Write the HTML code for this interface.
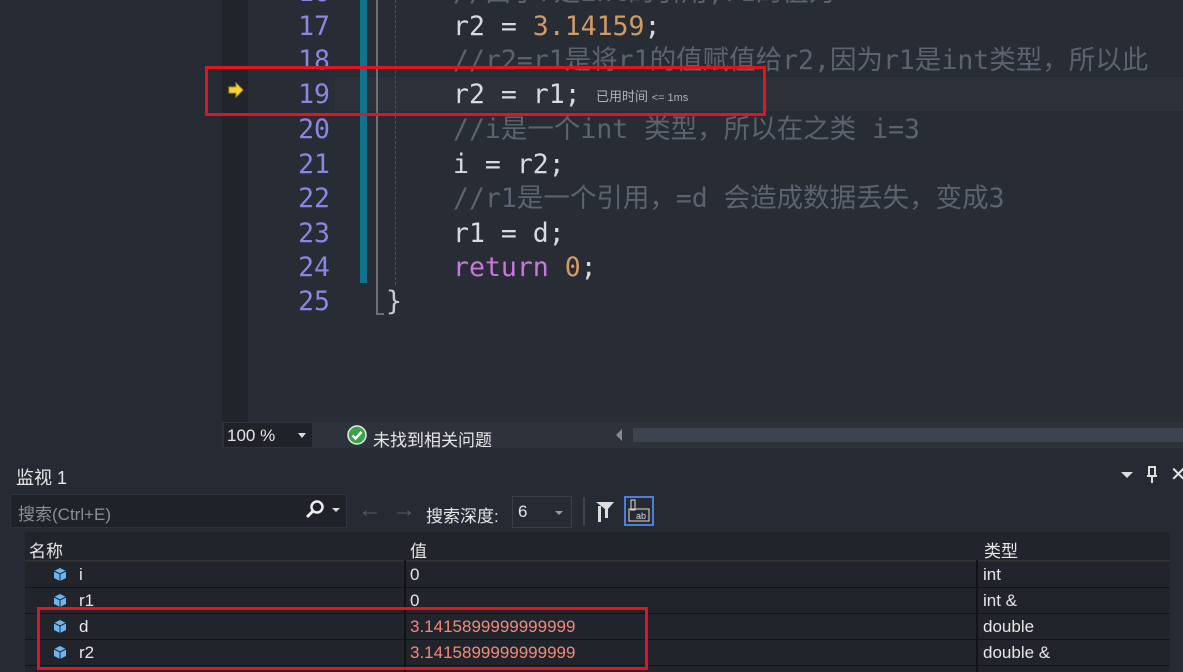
<!DOCTYPE html>
<html><head><meta charset="utf-8"><style>
body{margin:0;width:1183px;height:672px;overflow:hidden;background:#262a33;position:relative;font-family:"Liberation Sans","Noto Sans CJK SC",sans-serif}
.a{position:absolute}
.mono{font-family:"DejaVu Sans Mono","Noto Sans CJK SC",monospace;font-size:26.5px;white-space:pre;line-height:34px}
.ln{color:#8b86e6;width:60px;text-align:right;left:270px}
.c{left:453px;color:#d7dae0}
.cm{color:#5c6370}
.n{color:#d19a66}
.k{color:#c678dd}
.t{font-size:17px;color:#e6e6e6;white-space:nowrap}
.row{left:25px;width:1145px;height:25px;border-bottom:2px solid #111317;background:#21252b}
</style></head><body>
<div class="a" style="left:222px;top:0;width:26px;height:422px;background:#21252b"></div>
<div class="a" style="left:248px;top:0;width:935px;height:422px;background:#282c34"></div>
<div class="a" style="left:335px;top:77px;width:848px;height:34px;background:#2c313a"></div>
<div class="a" style="left:360px;top:0;width:7px;height:283px;background:#0e7490"></div>
<div class="a" style="left:376px;top:0;width:2px;height:315px;background:#6b6f77"></div>
<div class="a" style="left:376px;top:313px;width:8px;height:2px;background:#6b6f77"></div>
<div class="a" style="left:395px;top:0;width:0;height:285px;border-left:1px dashed #4b5059"></div>
<svg class="a" style="left:228px;top:82px" width="16" height="16"><path d="M1 5h7V1l7 7-7 7v-4H1z" fill="#f5d33b" stroke="#b8921a" stroke-width="1"/></svg>
<div class="a mono ln" style="top:-24px">16</div>
<div class="a mono ln" style="top:10px">17</div>
<div class="a mono ln" style="top:44px">18</div>
<div class="a mono ln" style="top:78px">19</div>
<div class="a mono ln" style="top:113px">20</div>
<div class="a mono ln" style="top:148px">21</div>
<div class="a mono ln" style="top:182px">22</div>
<div class="a mono ln" style="top:217px">23</div>
<div class="a mono ln" style="top:251px">24</div>
<div class="a mono ln" style="top:285px">25</div>
<div class="a mono c cm" style="top:-24px">//由于r是int的引用,r1的值为</div>
<div class="a mono c" style="top:10px">r2 = <span class="n">3.14159</span>;</div>
<div class="a mono c cm" style="top:44px">//r2=r1是将r1的值赋值给r2,因为r1是int类型，所以此</div>
<div class="a mono c" style="top:78px">r2 = r1;</div>
<div class="a" style="left:596px;top:86px;font-size:13px;color:#aeb2ba;white-space:nowrap">已用时间 <span style="font-size:11px">&lt;= 1ms</span></div>
<div class="a mono c cm" style="top:113px">//i是一个int 类型，所以在之类 i=3</div>
<div class="a mono c" style="top:148px">i = r2;</div>
<div class="a mono c cm" style="top:182px">//r1是一个引用，=d 会造成数据丢失，变成3</div>
<div class="a mono c" style="top:217px">r1 = d;</div>
<div class="a mono c" style="top:251px"><span class="k">return</span> <span class="n">0</span>;</div>
<div class="a mono" style="left:386px;top:285px;color:#c8cbd1">}</div>
<div class="a" style="left:205px;top:66px;width:555px;height:44px;border:3px solid #e3141f"></div>
<div class="a" style="left:222px;top:422px;width:961px;height:26px;background:#2e323b"></div>
<div class="a" style="left:224px;top:423px;width:88px;height:24px;background:#1f2229"></div>
<div class="a t" style="left:227px;top:426px">100 %</div>
<div class="a" style="left:298px;top:433px;border:4px solid transparent;border-top:5px solid #ddd"></div>
<svg class="a" style="left:347px;top:425px" width="20" height="20"><circle cx="10" cy="10" r="9" fill="#3ba34a" stroke="#e8e8e8" stroke-width="1.5"/><path d="M5.5 10.5l3 3 6-6.5" fill="none" stroke="#fff" stroke-width="2.4"/></svg>
<div class="a t" style="left:373px;top:426px">未找到相关问题</div>
<div class="a" style="left:616px;top:429px;border:6px solid transparent;border-right:6px solid #888;border-left:0"></div>
<div class="a" style="left:633px;top:428px;width:550px;height:14px;background:#3e4350"></div>
<div class="a t" style="left:16px;top:464px;font-size:18px">监视 1</div>
<div class="a" style="left:1121px;top:472px;border:6px solid transparent;border-top:6px solid #ddd"></div>
<svg class="a" style="left:1145px;top:466px" width="14" height="18"><path d="M4 1h6v9H4z M2 10h10 M7 10v7" fill="none" stroke="#ddd" stroke-width="2"/></svg>
<div class="a t" style="left:1170px;top:462px;font-size:20px">✕</div>
<div class="a" style="left:10px;top:494px;width:335px;height:32px;background:#1f2229;border:1px solid #2e323b"></div>
<div class="a t" style="left:18px;top:500px;color:#8a8e96">搜索(Ctrl+E)</div>
<svg class="a" style="left:303px;top:498px" width="24" height="24"><circle cx="14" cy="9" r="5.5" fill="none" stroke="#eee" stroke-width="2.5"/><path d="M10 13l-6 6" stroke="#eee" stroke-width="3"/></svg>
<div class="a" style="left:332px;top:508px;border:4px solid transparent;border-top:4px solid #ddd"></div>
<div class="a t" style="left:358px;top:496px;font-size:24px;color:#555a63">←</div>
<div class="a t" style="left:392px;top:496px;font-size:24px;color:#555a63">→</div>
<div class="a t" style="left:426px;top:502px">搜索深度:</div>
<div class="a" style="left:512px;top:496px;width:58px;height:30px;border:1px solid #3a3e47;background:#262a33"></div>
<div class="a t" style="left:518px;top:502px">6</div>
<div class="a" style="left:555px;top:511px;border:4px solid transparent;border-top:4px solid #999"></div>
<div class="a" style="left:583px;top:497px;width:2px;height:28px;background:#444"></div>
<svg class="a" style="left:594px;top:500px" width="22" height="24"><path d="M2 2h18l-6 7v9h-3V9z" fill="#ddd"/><rect x="4" y="6" width="3" height="16" fill="#ddd"/></svg>
<div class="a" style="left:624px;top:496px;width:30px;height:30px;border:2px solid #4f7fd0;box-sizing:border-box"></div>
<svg class="a" style="left:628px;top:499px" width="24" height="24"><rect x="3" y="1" width="4" height="10" fill="none" stroke="#ddd"/><rect x="1" y="10" width="20" height="12" fill="none" stroke="#ddd"/><text x="8" y="20" font-size="9" fill="#ddd" font-family="Liberation Sans">ab</text></svg>
<div class="a" style="left:25px;top:532px;width:1145px;height:28px;background:#21252b;border-bottom:1px solid #333"></div>
<div class="a t" style="left:29px;top:537px">名称</div>
<div class="a t" style="left:410px;top:537px">值</div>
<div class="a t" style="left:984px;top:537px">类型</div>
<div class="a row" style="top:562px"></div>
<div class="a row" style="top:588px"></div>
<div class="a row" style="top:614px"></div>
<div class="a row" style="top:640px"></div>
<div class="a" style="left:25px;top:666px;width:1145px;height:6px;background:#21252b"></div>
<div class="a" style="left:404px;top:560px;width:2px;height:112px;background:#111317"></div>
<div class="a" style="left:976px;top:560px;width:2px;height:112px;background:#111317"></div>
<div class="a" style="left:1170px;top:532px;width:13px;height:140px;background:#262a33"></div>
<svg class="a" style="left:52px;top:567px" width="16" height="16"><path d="M8 1l6 3v7l-6 3-6-3V4z" fill="#6cb4f2"/><path d="M2 4l6 3 6-3M8 7v7" fill="none" stroke="#21252b" stroke-width="1"/></svg>
<svg class="a" style="left:52px;top:593px" width="16" height="16"><path d="M8 1l6 3v7l-6 3-6-3V4z" fill="#6cb4f2"/><path d="M2 4l6 3 6-3M8 7v7" fill="none" stroke="#21252b" stroke-width="1"/></svg>
<svg class="a" style="left:52px;top:619px" width="16" height="16"><path d="M8 1l6 3v7l-6 3-6-3V4z" fill="#6cb4f2"/><path d="M2 4l6 3 6-3M8 7v7" fill="none" stroke="#21252b" stroke-width="1"/></svg>
<svg class="a" style="left:52px;top:645px" width="16" height="16"><path d="M8 1l6 3v7l-6 3-6-3V4z" fill="#6cb4f2"/><path d="M2 4l6 3 6-3M8 7v7" fill="none" stroke="#21252b" stroke-width="1"/></svg>
<div class="a t" style="left:79px;top:565px">i</div>
<div class="a t" style="left:79px;top:591px">r1</div>
<div class="a t" style="left:79px;top:617px">d</div>
<div class="a t" style="left:79px;top:643px">r2</div>
<div class="a t" style="left:410px;top:565px">0</div>
<div class="a t" style="left:410px;top:591px">0</div>
<div class="a t" style="left:410px;top:617px;color:#f08a7c">3.1415899999999999</div>
<div class="a t" style="left:410px;top:643px;color:#f08a7c">3.1415899999999999</div>
<div class="a t" style="left:983px;top:565px">int</div>
<div class="a t" style="left:983px;top:591px">int &amp;</div>
<div class="a t" style="left:983px;top:617px">double</div>
<div class="a t" style="left:983px;top:643px">double &amp;</div>
<div class="a" style="left:37px;top:607px;width:605px;height:57px;border:3px solid #e3141f"></div>
</body></html>
